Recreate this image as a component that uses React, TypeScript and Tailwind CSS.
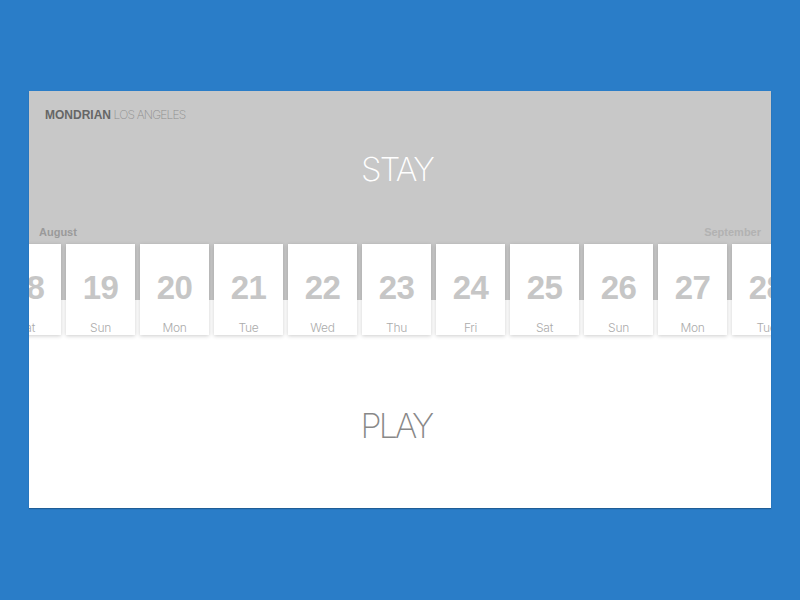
import React from "react";

type Day = { date: number; name: string };

const days: Day[] = [
  { date: 18, name: "Sat" },
  { date: 19, name: "Sun" },
  { date: 20, name: "Mon" },
  { date: 21, name: "Tue" },
  { date: 22, name: "Wed" },
  { date: 23, name: "Thu" },
  { date: 24, name: "Fri" },
  { date: 25, name: "Sat" },
  { date: 26, name: "Sun" },
  { date: 27, name: "Mon" },
  { date: 28, name: "Tue" },
];

const helv = { fontFamily: '"Liberation Sans", Arial, sans-serif' };
const thin = { fontFamily: 'Inter, "Liberation Sans", sans-serif' };

const DayCard = ({ day }: { day: Day }) => (
  <div className="w-[69px] h-[91px] shrink-0 bg-white flex flex-col items-center shadow-[0_1px_4px_rgba(0,0,0,0.2)]">
    <span
      className="mt-[28px] text-[33px] leading-[32px] font-bold text-[#c6c6c6] tracking-[-0.5px]"
      style={helv}
    >
      {day.date}
    </span>
    <span
      className="mt-[17px] text-[12px] leading-[14px] font-light text-[#ababab] tracking-[-0.3px]"
      style={thin}
    >
      {day.name}
    </span>
  </div>
);

export default function App() {
  return (
    <div className="w-[800px] h-[600px] bg-[#2a7dc8] pt-[91px] px-[29px]">
      <div className="w-[742px] h-[417px] bg-white overflow-hidden flex flex-col shadow-[0_1px_1px_rgba(0,0,0,0.25)]">
        {/* Stay header */}
        <div className="h-[153px] bg-[#c8c8c8] flex flex-col">
          <div className="mt-[17px] ml-[16px] h-[14px] text-[12px] leading-[14px]" style={helv}>
            <span className="font-bold text-[#666]">MONDRIAN</span>
            <span className="font-extralight text-[#8f8f8f] tracking-[-0.8px]" style={thin}>
              {" "}LOS ANGELES
            </span>
          </div>
          <div
            className="mt-[31px] h-[32px] pr-[6px] text-center text-[33px] leading-[32px] font-extralight text-white tracking-[-1.8px]"
            style={thin}
          >
            STAY
          </div>
          <div
            className="mt-[41px] h-[13px] px-[10px] flex justify-between text-[11px] leading-[13px] font-bold"
            style={helv}
          >
            <span className="text-[#9a9a9a]">August</span>
            <span className="text-[#b2b2b2]">September</span>
          </div>
        </div>

        {/* Date strip */}
        <div className="h-[92px] bg-[linear-gradient(to_bottom,#c8c8c8_56px,#ffffff_56px)]">
          <div className="flex gap-[5px] ml-[-37px]">
            {days.map((d) => (
              <DayCard key={d.date} day={d} />
            ))}
          </div>
        </div>

        {/* Play section */}
        <div className="flex-1 flex justify-center pr-[8px]">
          <div
            className="mt-[73px] h-[34px] text-[34px] leading-[34px] font-extralight text-[#888] tracking-[-2.8px]"
            style={thin}
          >
            PLAY
          </div>
        </div>
      </div>
    </div>
  );
}
